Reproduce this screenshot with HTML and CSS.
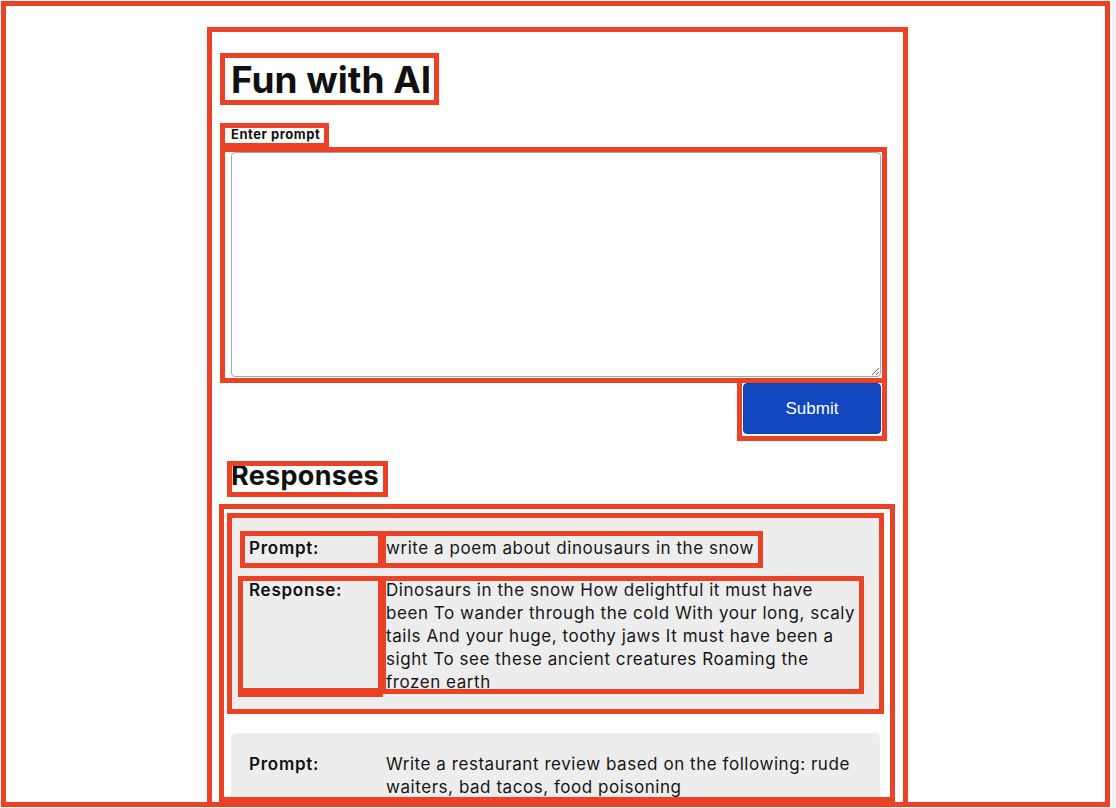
FILE: index.html
```html
<!DOCTYPE html>
<html lang="en">
<head>
<meta charset="utf-8">
<title>Fun with AI</title>
<link rel="stylesheet" href="styles.css">
</head>
<body>
<div class="page">
  <main class="container mark">
    <h1 class="title mark">Fun with AI</h1>
    <form class="prompt-form">
      <label class="field-label mark" for="prompt">Enter prompt</label>
      <div class="field mark"><textarea id="prompt" class="prompt-input"></textarea></div>
      <div class="actions">
        <div class="submit-wrap mark"><button type="button" class="submit">Submit</button></div>
      </div>
    </form>
    <h2 class="section-title mark">Responses</h2>
    <div class="list mark">
      <div class="card card-marked">
        <div class="row row-prompt">
          <div class="key mark key-prompt">Prompt:</div>
          <div class="val mark val-prompt">write a poem about dinousaurs in the snow</div>
        </div>
        <div class="row row-response">
          <div class="key mark key-response">Response:</div>
          <div class="val mark val-response">Dinosaurs in the snow How delightful it must have been To wander through the cold With your long, scaly tails And your huge, toothy jaws It must have been a sight To see these ancient creatures Roaming the frozen earth</div>
        </div>
      </div>
      <div class="card">
        <div class="row row-prompt">
          <div class="key key-prompt">Prompt:</div>
          <div class="val val-prompt">Write a restaurant review based on the following: rude waiters, bad tacos, food poisoning</div>
        </div>
        <div class="row row-response">
          <div class="key key-response">Response:</div>
          <div class="val val-response">I recently had the displeasure of dining at this restaurant and I must say it was a terrible experience.</div>
        </div>
      </div>
    </div>
  </main>
</div>
</body>
</html>
```

FILE: styles.css
```css
* {
  box-sizing: border-box;
}

html,
body {
  margin: 0;
  padding: 0;
}

body {
  height: 808px;
  overflow: hidden;
  background: linear-gradient(to right, #ffffff 1112px, #f1f1f1 1112px);
  font-family: Inter, "Noto Sans", "Liberation Sans", sans-serif;
  color: #111111;
}

.mark {
  outline: 5px solid #ea4127;
  outline-offset: -5px;
}

.page {
  margin: 1px 0 0 1px;
  width: 1109px;
  height: 806px;
  border: 5px solid #ea4127;
  background: #ffffff;
  overflow: hidden;
}

.container {
  margin: 21px 0 0 201px;
  width: 701px;
  min-height: 900px;
  padding: 26px 21px 0 13px;
}

.title {
  margin: 0;
  width: 219px;
  height: 52px;
  padding: 2px 0 0 11px;
  font-size: 37px;
  font-weight: 700;
  line-height: 50px;
  letter-spacing: 0;
  white-space: nowrap;
}

.prompt-form {
  margin: 0;
}

.field-label {
  display: block;
  margin-top: 18px;
  width: 109px;
  height: 25px;
  padding-left: 11px;
  font-size: 13px;
  font-weight: 700;
  line-height: 23px;
  letter-spacing: 0.55px;
  white-space: nowrap;
}

.field {
  margin-top: -1px;
  height: 236px;
  padding: 5px 6px 6px 11px;
}

.prompt-input {
  display: block;
  width: 100%;
  height: 100%;
  margin: 0;
  border: 1px solid #a8a8a8;
  border-radius: 4px;
  background: #ffffff;
  font-family: inherit;
  font-size: 15px;
}

.actions {
  display: flex;
  justify-content: flex-end;
  margin-top: -5px;
}

.submit-wrap {
  width: 150px;
  height: 63px;
  padding: 5px 6px 7px 6px;
}

.submit {
  display: block;
  width: 100%;
  height: 100%;
  margin: 0;
  border: 1px solid #0f3fae;
  border-radius: 4px;
  background: #1247c0;
  color: #ffffff;
  font-family: "Liberation Sans", Arial, sans-serif;
  font-size: 17px;
  padding: 0;
}

.section-title {
  margin: 20px 0 0 7px;
  width: 161px;
  height: 36px;
  padding-left: 4px;
  font-size: 27px;
  font-weight: 700;
  line-height: 29px;
  letter-spacing: 0.3px;
  white-space: nowrap;
}

.list {
  margin: 7px -8px 0 -1px;
  height: 298px;
  padding: 13px 15px 0 12px;
}

.card {
  background: #ededed;
  border-radius: 6px;
  padding: 14px 0 12px 9px;
}

.card + .card {
  margin-top: 23px;
}

.card-marked {
  border-radius: 0;
  outline: 5px solid #ea4127;
  outline-offset: -1px;
  padding-bottom: 13px;
}

.row {
  display: flex;
  align-items: flex-start;
}

.row-response {
  margin-top: 8px;
  margin-left: -2px;
}

.key {
  flex: none;
  font-size: 17px;
  font-weight: 600;
  line-height: 23px;
  letter-spacing: 0.75px;
}

.key-prompt {
  width: 143px;
  height: 37px;
  padding: 6px 0 0 9px;
}

.key-response {
  width: 145px;
  height: 121px;
  padding: 3px 0 0 11px;
}

.key-response.mark {
  box-shadow: inset 0 -9px 0 #ea4127;
}

.val {
  flex: 0 1 auto;
  max-width: 483px;
  margin-left: -2px;
  font-size: 17px;
  font-weight: 400;
  line-height: 23px;
  letter-spacing: 0.55px;
  color: #161616;
}

.val-prompt {
  height: 37px;
  padding: 6px 9px 0 5px;
}

.val-response {
  padding: 3px 6px 0 5px;
}
```
